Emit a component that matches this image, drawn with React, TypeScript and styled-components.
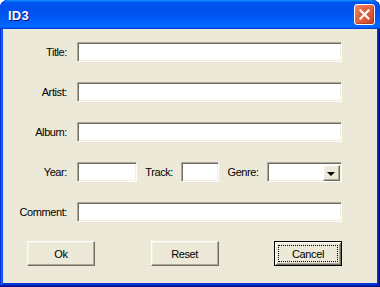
import styled, { createGlobalStyle, css } from 'styled-components';

const GlobalStyle = createGlobalStyle`
  html, body {
    margin: 0;
    padding: 0;
    background: #ffffff;
  }
  body {
    font-family: "Liberation Sans", Arial, sans-serif;
  }
`;

const sunken = css`
  box-sizing: border-box;
  border-style: solid;
  border-width: 1px;
  border-color: #aca899 #ffffff #ffffff #aca899;
  box-shadow: inset 1px 1px 0 #716f64, inset -1px -1px 0 #f1efe2;
  background: #ffffff;
`;

const raised = css`
  box-sizing: border-box;
  border-style: solid;
  border-width: 1px;
  border-color: #ffffff #716f64 #716f64 #ffffff;
  box-shadow: inset -1px -1px 0 #aca899, inset 1px 1px 0 #f1efe2;
  background: #ece9d8;
`;

const uiText = css`
  font-size: 11px;
  letter-spacing: -0.4px;
  color: #000000;
`;

export default function App() {
  return (
    <>
      <GlobalStyle />
      <Window>
        <TitleBar>
          <TitleText>ID3</TitleText>
          <CloseButton aria-label="Close">
            <svg width="11" height="11" viewBox="0 0 11 11">
              <path d="M1.5 1.5 L9.5 9.5 M9.5 1.5 L1.5 9.5" stroke="#ffffff" strokeWidth="2.2" strokeLinecap="square" />
            </svg>
          </CloseButton>
        </TitleBar>
        <Client>
          <Form>
            <Label>Title:</Label>
            <TextBox />
            <Label>Artist:</Label>
            <TextBox />
            <Label>Album:</Label>
            <TextBox />
            <Label>Year:</Label>
            <InlineRow>
              <TextBox $width={60} />
              <Label>Track:</Label>
              <TextBox $width={38} />
              <Label>Genre:</Label>
              <Combo>
                <ComboButton>
                  <Arrow />
                </ComboButton>
              </Combo>
            </InlineRow>
            <Label>Comment:</Label>
            <TextBox />
          </Form>
          <ButtonRow>
            <PushButton>Ok</PushButton>
            <PushButton>Reset</PushButton>
            <PushButton $default>
              <FocusRect>Cancel</FocusRect>
            </PushButton>
          </ButtonRow>
        </Client>
      </Window>
    </>
  );
}

const Window = styled.div`
  width: 380px;
  height: 287px;
  display: flex;
  flex-direction: column;
  background: #0831d9;
  border-radius: 8px 8px 0 0;
  box-shadow: inset -1px -1px #00138c, inset 1px 1px #0831d9, inset -2px -2px #001ea0,
    inset 2px 2px #166aee, inset -3px -3px #003bda, inset 3px 3px #0855dd;
  overflow: hidden;
`;

const TitleBar = styled.div`
  height: 29px;
  flex: none;
  display: flex;
  align-items: center;
  justify-content: space-between;
  padding: 0 5px 0 8px;
  border-radius: 8px 8px 0 0;
  background: linear-gradient(
    180deg,
    #0997ff,
    #0053ee 8%,
    #0050ee 40%,
    #06f 88%,
    #06f 93%,
    #005bff 95%,
    #003dd7 96%,
    #003dd7
  );
`;

const TitleText = styled.span`
  font-weight: bold;
  font-size: 13px;
  color: #ffffff;
  text-shadow: 1px 1px 0 #0f1089;
  letter-spacing: 0.2px;
  margin-top: 1px;
`;

const CloseButton = styled.div`
  width: 21px;
  height: 21px;
  box-sizing: border-box;
  border: 1px solid #ffffff;
  border-radius: 3px;
  display: flex;
  align-items: center;
  justify-content: center;
  background: radial-gradient(circle at 85% 85%, #cc4628 0%, #dc5a3a 35%, #e2643f 60%, #f08b6a 100%);
  box-shadow: inset -1px -1px 1px rgba(140, 30, 10, 0.5);
`;

const Client = styled.div`
  flex: 1;
  margin: 0 3px 4px 3px;
  background: #ece9d8;
  padding-top: 13px;
`;

const Form = styled.div`
  display: grid;
  grid-template-columns: 64px 265px;
  column-gap: 10px;
  row-gap: 20px;
  align-items: center;
`;

const Label = styled.span`
  ${uiText};
  text-align: right;
  white-space: nowrap;
  line-height: 14px;
`;

const TextBox = styled.div<{ $width?: number }>`
  ${sunken};
  height: 20px;
  width: ${(p) => (p.$width ? `${p.$width}px` : '100%')};
  flex: none;
`;

const InlineRow = styled.div`
  display: flex;
  align-items: center;
  justify-content: space-between;
`;

const Combo = styled.div`
  ${sunken};
  width: 75px;
  height: 20px;
  display: flex;
  justify-content: flex-end;
  padding: 2px 1px 2px 0;
`;

const ComboButton = styled.div`
  ${raised};
  width: 17px;
  height: 16px;
  display: flex;
  align-items: center;
  justify-content: center;
`;

const Arrow = styled.div`
  width: 0;
  height: 0;
  border-left: 4px solid transparent;
  border-right: 4px solid transparent;
  border-top: 4px solid #000000;
  margin-top: 1px;
`;

const ButtonRow = styled.div`
  display: flex;
  justify-content: space-between;
  width: 315px;
  margin: 19px 0 0 24px;
`;

const PushButton = styled.div<{ $default?: boolean }>`
  ${raised};
  ${uiText};
  width: 68px;
  height: 25px;
  display: flex;
  align-items: center;
  justify-content: center;
  ${(p) =>
    p.$default &&
    css`
      border: 1px solid #000000;
      box-shadow: inset 1px 1px 0 #ffffff, inset -1px -1px 0 #716f64, inset 2px 2px 0 #f1efe2,
        inset -2px -2px 0 #aca899;
      padding: 3px;
    `}
`;

const FocusRect = styled.div`
  flex: 1;
  align-self: stretch;
  display: flex;
  align-items: center;
  justify-content: center;
  border: 1px dotted #000000;
`;
